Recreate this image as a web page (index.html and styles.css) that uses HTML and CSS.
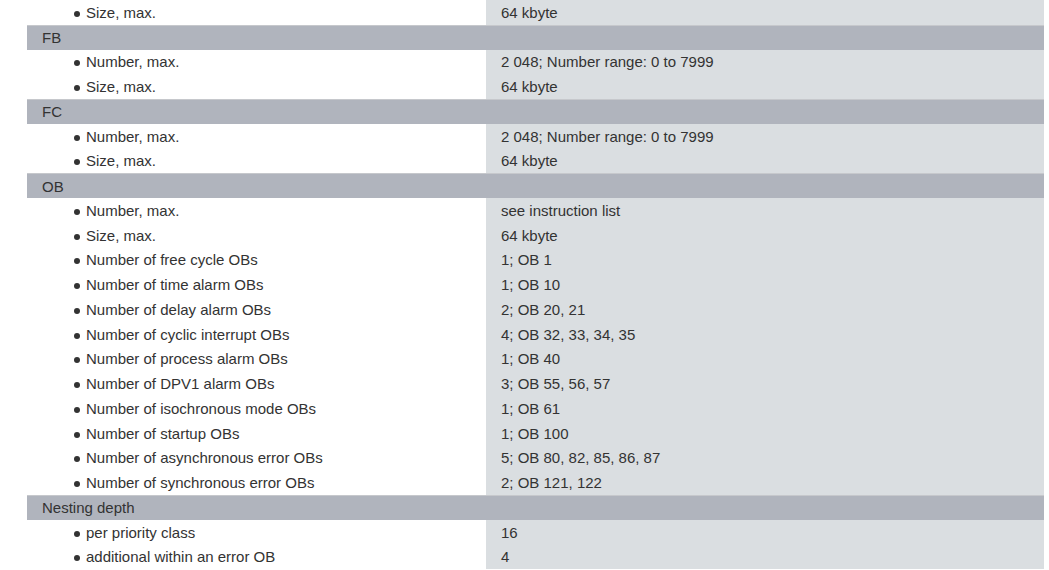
FILE: index.html
```html
<!DOCTYPE html>
<html>
<head>
<meta charset="utf-8">
<link rel="stylesheet" href="styles.css">
</head>
<body>
<div class="table">
  <div class="row"><div class="key"><span class="dot"></span>Size, max.</div><div class="val">64 kbyte</div></div>
  <div class="row head"><div class="key">FB</div><div class="val"></div></div>
  <div class="row"><div class="key"><span class="dot"></span>Number, max.</div><div class="val">2 048; Number range: 0 to 7999</div></div>
  <div class="row"><div class="key"><span class="dot"></span>Size, max.</div><div class="val">64 kbyte</div></div>
  <div class="row head"><div class="key">FC</div><div class="val"></div></div>
  <div class="row"><div class="key"><span class="dot"></span>Number, max.</div><div class="val">2 048; Number range: 0 to 7999</div></div>
  <div class="row"><div class="key"><span class="dot"></span>Size, max.</div><div class="val">64 kbyte</div></div>
  <div class="row head"><div class="key">OB</div><div class="val"></div></div>
  <div class="row"><div class="key"><span class="dot"></span>Number, max.</div><div class="val">see instruction list</div></div>
  <div class="row"><div class="key"><span class="dot"></span>Size, max.</div><div class="val">64 kbyte</div></div>
  <div class="row"><div class="key"><span class="dot"></span>Number of free cycle OBs</div><div class="val">1; OB 1</div></div>
  <div class="row"><div class="key"><span class="dot"></span>Number of time alarm OBs</div><div class="val">1; OB 10</div></div>
  <div class="row"><div class="key"><span class="dot"></span>Number of delay alarm OBs</div><div class="val">2; OB 20, 21</div></div>
  <div class="row"><div class="key"><span class="dot"></span>Number of cyclic interrupt OBs</div><div class="val">4; OB 32, 33, 34, 35</div></div>
  <div class="row"><div class="key"><span class="dot"></span>Number of process alarm OBs</div><div class="val">1; OB 40</div></div>
  <div class="row"><div class="key"><span class="dot"></span>Number of DPV1 alarm OBs</div><div class="val">3; OB 55, 56, 57</div></div>
  <div class="row"><div class="key"><span class="dot"></span>Number of isochronous mode OBs</div><div class="val">1; OB 61</div></div>
  <div class="row"><div class="key"><span class="dot"></span>Number of startup OBs</div><div class="val">1; OB 100</div></div>
  <div class="row"><div class="key"><span class="dot"></span>Number of asynchronous error OBs</div><div class="val">5; OB 80, 82, 85, 86, 87</div></div>
  <div class="row"><div class="key"><span class="dot"></span>Number of synchronous error OBs</div><div class="val">2; OB 121, 122</div></div>
  <div class="row head"><div class="key">Nesting depth</div><div class="val"></div></div>
  <div class="row"><div class="key"><span class="dot"></span>per priority class</div><div class="val">16</div></div>
  <div class="row"><div class="key"><span class="dot"></span>additional within an error OB</div><div class="val">4</div></div>
</div>
</body>
</html>
```
FILE: styles.css
```css
html, body {
  margin: 0;
  padding: 0;
  background: #ffffff;
}
body {
  font-family: "Liberation Sans", Arial, sans-serif;
  font-size: 15px;
  color: #333333;
}
.table {
  margin-left: 27px;
  width: 1017px;
  display: flex;
  flex-direction: column;
}
.row {
  display: grid;
  grid-template-columns: 459px 558px;
  height: 24.75px;
  box-sizing: border-box;
}
.key, .val {
  display: flex;
  align-items: center;
  white-space: nowrap;
}
.key {
  padding-left: 47px;
}
.val {
  background: #dadee1;
  padding-left: 15px;
}
.dot {
  width: 6px;
  height: 6px;
  border-radius: 50%;
  background: #333333;
  margin-right: 6px;
  margin-top: 3px;
  flex: none;
}
.head {
  background: #b0b4bd;
  border-top: 1px solid #c6c8cc;
}
.head .key {
  padding-left: 15px;
}
.head .val {
  background: transparent;
}
```
